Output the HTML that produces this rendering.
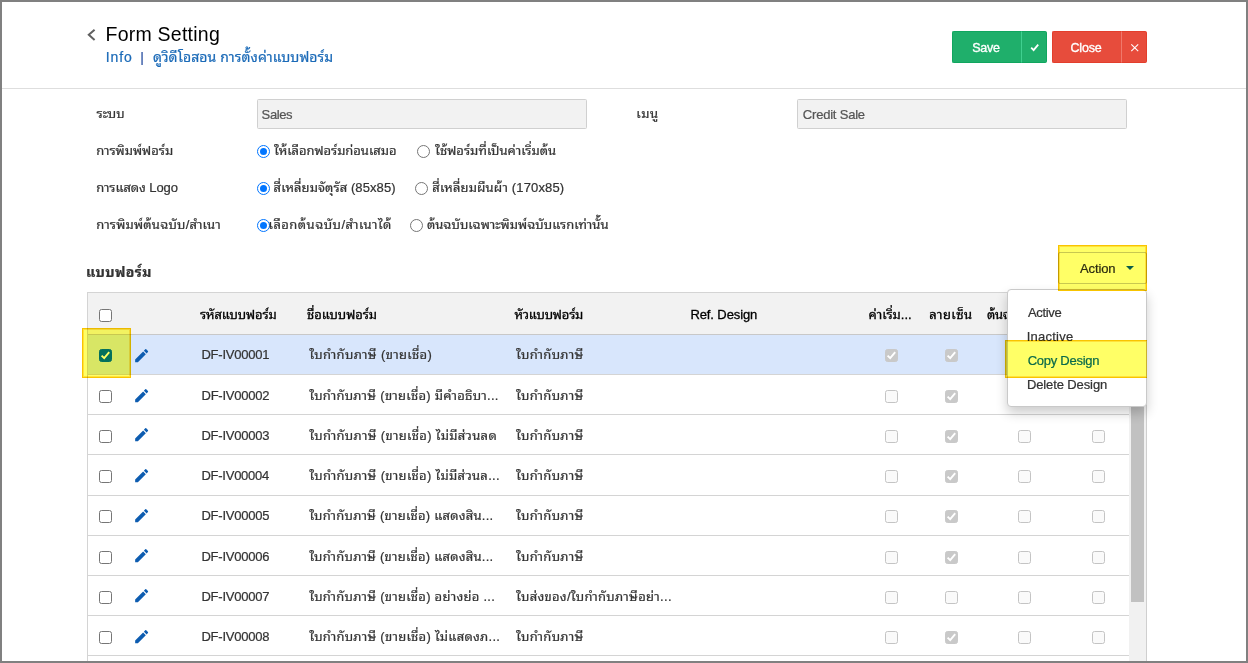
<!DOCTYPE html>
<html lang="th">
<head>
<meta charset="utf-8">
<title>Form Setting</title>
<style>
*{box-sizing:border-box;margin:0;padding:0}
html,body{width:1248px;height:663px;overflow:hidden;background:#fff}
body{position:relative;font-family:"Liberation Sans","Noto Sans Thai Looped","Loma","Noto Sans Thai",sans-serif;font-size:13px;color:#333}
.abs{position:absolute}
.t{position:absolute;white-space:nowrap;line-height:20px;height:20px}

.frame{position:absolute;left:0;top:0;width:1248px;height:663px;border:2px solid #808080;z-index:50;pointer-events:none}
.hline{position:absolute;left:2px;top:88px;width:1244px;height:1px;background:#dedede}
.inp{position:absolute;height:30px;width:330px;background:#f2f2f2;border:1px solid #d0d0d0;border-radius:1.5px}
.radio{position:absolute;width:13px;height:13px;border-radius:50%;border:1px solid #767676;background:#fff}
.radio.on{border:1.5px solid #0075ff}
.radio.on:after{content:"";position:absolute;left:1.5px;top:1.5px;width:7px;height:7px;border-radius:50%;background:#0075ff}
.btn{position:absolute;top:31px;height:32px;color:#fff;font-size:13px;line-height:30px;text-align:center}
.bt{display:inline-block;font-size:12.5px;letter-spacing:-.2px;left:-1.5px;-webkit-text-stroke:.35px #fff;position:relative;top:1px}
.hl{position:absolute;background:#ffff66;border:1px solid #f8c400;box-shadow:inset 0 0 0 1px #ffe23a;z-index:20;mix-blend-mode:multiply}
.cb{position:absolute;width:13px;height:13px;border:1px solid #767676;border-radius:2.5px;background:#fff}
.cb.dis{border-color:#c4c4c4;background:#fafafa}
.cb.dis.on{background:#c9c9c9;border-color:#c9c9c9}
.cb.chk{background:#04705c;border-color:#04705c;z-index:25}
.ln{position:absolute;left:88px;width:1041px;height:1px;background:#d4d4d4}
.menu{position:absolute;left:1007px;top:289px;width:140px;height:118px;background:#fff;border:1px solid #c9c9c9;border-radius:4px;box-shadow:0 6px 12px rgba(0,0,0,.2);z-index:10}
</style>
</head>
<body>
<div class="frame"></div>
<svg class="abs" style="left:84px;top:26px" width="16" height="18" viewBox="0 0 16 18"><polyline points="10.6,3.7 4.8,8.8 10.6,13.9" fill="none" stroke="#606060" stroke-width="2"/></svg>
<div class="btn" style="left:952px;width:70px;background:#1faf6b;border:1px solid #10a65f;border-right:0;border-radius:2px 0 0 2px"><span class="bt">Save</span></div>
<div class="btn" style="left:1021px;width:26px;background:#1faf6b;border:1px solid #10a65f;border-left:1px solid #3fd08f;border-radius:0 2px 2px 0">
<svg width="12" height="10" viewBox="0 0 12 10" style="position:absolute;left:8px;top:11px"><polyline points="1.2,4.7 3.6,7.1 8.2,1.6" fill="none" stroke="#fff" stroke-width="1.8"/></svg></div>
<div class="btn" style="left:1052px;width:70px;background:#e74c3c;border:1px solid #e33e2c;border-right:0;border-radius:2px 0 0 2px"><span class="bt">Close</span></div>
<div class="btn" style="left:1121px;width:26px;background:#e74c3c;border:1px solid #e33e2c;border-left:1px solid #f0786b;border-radius:0 2px 2px 0">
<svg width="10" height="10" viewBox="0 0 10 10" style="position:absolute;left:8px;top:11px"><path d="M1.3 1.3L8.2 8.2M8.2 1.3L1.3 8.2" fill="none" stroke="#fff" stroke-width="1.1"/></svg></div>
<div class="hline"></div>
<div class="inp" style="left:257px;top:99px"></div>
<div class="inp" style="left:797px;top:99px"></div>
<div class="radio on" style="left:257px;top:145px"></div>
<div class="radio" style="left:417px;top:145px"></div>
<div class="radio on" style="left:257px;top:182px"></div>
<div class="radio" style="left:415px;top:182px"></div>
<div class="radio on" style="left:257px;top:219px"></div>
<div class="radio" style="left:410px;top:219px"></div>
<div class="abs" style="left:1058px;top:252px;width:89px;height:32px;border:1px solid #c8c8c8;border-radius:2px;background:#fff"></div>
<div class="abs" style="left:1126px;top:266px;width:0;height:0;border-left:4px solid transparent;border-right:4px solid transparent;border-top:4px solid #0b5c4a;z-index:25"></div>
<div class="hl" style="left:1058px;top:245px;width:89px;height:46px"></div>
<div class="abs" style="left:87px;top:292px;width:1044px;height:371px;border:1px solid #d4d4d4;border-bottom:0"></div>
<div class="abs" style="left:88px;top:293px;width:1042px;height:41px;background:#f2f2f2"></div>
<div class="abs" style="left:88px;top:335px;width:1042px;height:39px;background:#d8e6fc"></div>
<div class="ln" style="top:334px;background:#c8c8c8"></div>
<div class="ln" style="top:374px;background:#d4d4d4"></div>
<div class="ln" style="top:414px;background:#d4d4d4"></div>
<div class="ln" style="top:454px;background:#d4d4d4"></div>
<div class="ln" style="top:495px;background:#d4d4d4"></div>
<div class="ln" style="top:535px;background:#d4d4d4"></div>
<div class="ln" style="top:575px;background:#d4d4d4"></div>
<div class="ln" style="top:615px;background:#d4d4d4"></div>
<div class="ln" style="top:655px;background:#d4d4d4"></div>
<div class="cb" style="left:99px;top:309px"></div>
<div class="cb chk" style="left:99px;top:349px"><svg width="11" height="11" viewBox="0 0 11 11" style="position:absolute;left:0;top:0"><polyline points="1.6,5.6 4.2,8.2 9.2,2.2" fill="none" stroke="#ffff66" stroke-width="1.9"/></svg></div>
<svg class="abs" style="left:132.7px;top:346.8px" width="17.3" height="17.3" viewBox="0 0 24 24"><path fill="#0d5cb0" d="M3 17.25V21h3.75L17.81 9.94l-3.75-3.75L3 17.25zM20.71 7.04a1 1 0 0 0 0-1.41l-2.34-2.34a1 1 0 0 0-1.41 0l-1.83 1.83 3.75 3.75 1.83-1.83z"/></svg>
<div class="cb dis on" style="left:885px;top:349px"><svg width="11" height="11" viewBox="0 0 11 11" style="position:absolute;left:0;top:0"><polyline points="1.6,5.6 4.2,8.2 9.2,2.2" fill="none" stroke="#fff" stroke-width="1.9"/></svg></div>
<div class="cb dis on" style="left:945px;top:349px"><svg width="11" height="11" viewBox="0 0 11 11" style="position:absolute;left:0;top:0"><polyline points="1.6,5.6 4.2,8.2 9.2,2.2" fill="none" stroke="#fff" stroke-width="1.9"/></svg></div>
<div class="cb" style="left:99px;top:390px"></div>
<svg class="abs" style="left:132.7px;top:386.6px" width="17.3" height="17.3" viewBox="0 0 24 24"><path fill="#0d5cb0" d="M3 17.25V21h3.75L17.81 9.94l-3.75-3.75L3 17.25zM20.71 7.04a1 1 0 0 0 0-1.41l-2.34-2.34a1 1 0 0 0-1.41 0l-1.83 1.83 3.75 3.75 1.83-1.83z"/></svg>
<div class="cb dis" style="left:885px;top:390px"></div>
<div class="cb dis on" style="left:945px;top:390px"><svg width="11" height="11" viewBox="0 0 11 11" style="position:absolute;left:0;top:0"><polyline points="1.6,5.6 4.2,8.2 9.2,2.2" fill="none" stroke="#fff" stroke-width="1.9"/></svg></div>
<div class="cb" style="left:99px;top:430px"></div>
<svg class="abs" style="left:132.7px;top:426.4px" width="17.3" height="17.3" viewBox="0 0 24 24"><path fill="#0d5cb0" d="M3 17.25V21h3.75L17.81 9.94l-3.75-3.75L3 17.25zM20.71 7.04a1 1 0 0 0 0-1.41l-2.34-2.34a1 1 0 0 0-1.41 0l-1.83 1.83 3.75 3.75 1.83-1.83z"/></svg>
<div class="cb dis" style="left:885px;top:430px"></div>
<div class="cb dis on" style="left:945px;top:430px"><svg width="11" height="11" viewBox="0 0 11 11" style="position:absolute;left:0;top:0"><polyline points="1.6,5.6 4.2,8.2 9.2,2.2" fill="none" stroke="#fff" stroke-width="1.9"/></svg></div>
<div class="cb dis" style="left:1018px;top:430px"></div>
<div class="cb dis" style="left:1092px;top:430px"></div>
<div class="cb" style="left:99px;top:470px"></div>
<svg class="abs" style="left:132.7px;top:466.6px" width="17.3" height="17.3" viewBox="0 0 24 24"><path fill="#0d5cb0" d="M3 17.25V21h3.75L17.81 9.94l-3.75-3.75L3 17.25zM20.71 7.04a1 1 0 0 0 0-1.41l-2.34-2.34a1 1 0 0 0-1.41 0l-1.83 1.83 3.75 3.75 1.83-1.83z"/></svg>
<div class="cb dis" style="left:885px;top:470px"></div>
<div class="cb dis on" style="left:945px;top:470px"><svg width="11" height="11" viewBox="0 0 11 11" style="position:absolute;left:0;top:0"><polyline points="1.6,5.6 4.2,8.2 9.2,2.2" fill="none" stroke="#fff" stroke-width="1.9"/></svg></div>
<div class="cb dis" style="left:1018px;top:470px"></div>
<div class="cb dis" style="left:1092px;top:470px"></div>
<div class="cb" style="left:99px;top:510px"></div>
<svg class="abs" style="left:132.7px;top:507.4px" width="17.3" height="17.3" viewBox="0 0 24 24"><path fill="#0d5cb0" d="M3 17.25V21h3.75L17.81 9.94l-3.75-3.75L3 17.25zM20.71 7.04a1 1 0 0 0 0-1.41l-2.34-2.34a1 1 0 0 0-1.41 0l-1.83 1.83 3.75 3.75 1.83-1.83z"/></svg>
<div class="cb dis" style="left:885px;top:510px"></div>
<div class="cb dis on" style="left:945px;top:510px"><svg width="11" height="11" viewBox="0 0 11 11" style="position:absolute;left:0;top:0"><polyline points="1.6,5.6 4.2,8.2 9.2,2.2" fill="none" stroke="#fff" stroke-width="1.9"/></svg></div>
<div class="cb dis" style="left:1018px;top:510px"></div>
<div class="cb dis" style="left:1092px;top:510px"></div>
<div class="cb" style="left:99px;top:551px"></div>
<svg class="abs" style="left:132.7px;top:547.2px" width="17.3" height="17.3" viewBox="0 0 24 24"><path fill="#0d5cb0" d="M3 17.25V21h3.75L17.81 9.94l-3.75-3.75L3 17.25zM20.71 7.04a1 1 0 0 0 0-1.41l-2.34-2.34a1 1 0 0 0-1.41 0l-1.83 1.83 3.75 3.75 1.83-1.83z"/></svg>
<div class="cb dis" style="left:885px;top:551px"></div>
<div class="cb dis on" style="left:945px;top:551px"><svg width="11" height="11" viewBox="0 0 11 11" style="position:absolute;left:0;top:0"><polyline points="1.6,5.6 4.2,8.2 9.2,2.2" fill="none" stroke="#fff" stroke-width="1.9"/></svg></div>
<div class="cb dis" style="left:1018px;top:551px"></div>
<div class="cb dis" style="left:1092px;top:551px"></div>
<div class="cb" style="left:99px;top:591px"></div>
<svg class="abs" style="left:132.7px;top:587.0px" width="17.3" height="17.3" viewBox="0 0 24 24"><path fill="#0d5cb0" d="M3 17.25V21h3.75L17.81 9.94l-3.75-3.75L3 17.25zM20.71 7.04a1 1 0 0 0 0-1.41l-2.34-2.34a1 1 0 0 0-1.41 0l-1.83 1.83 3.75 3.75 1.83-1.83z"/></svg>
<div class="cb dis" style="left:885px;top:591px"></div>
<div class="cb dis" style="left:945px;top:591px"></div>
<div class="cb dis" style="left:1018px;top:591px"></div>
<div class="cb dis" style="left:1092px;top:591px"></div>
<div class="cb" style="left:99px;top:631px"></div>
<svg class="abs" style="left:132.7px;top:627.8px" width="17.3" height="17.3" viewBox="0 0 24 24"><path fill="#0d5cb0" d="M3 17.25V21h3.75L17.81 9.94l-3.75-3.75L3 17.25zM20.71 7.04a1 1 0 0 0 0-1.41l-2.34-2.34a1 1 0 0 0-1.41 0l-1.83 1.83 3.75 3.75 1.83-1.83z"/></svg>
<div class="cb dis" style="left:885px;top:631px"></div>
<div class="cb dis on" style="left:945px;top:631px"><svg width="11" height="11" viewBox="0 0 11 11" style="position:absolute;left:0;top:0"><polyline points="1.6,5.6 4.2,8.2 9.2,2.2" fill="none" stroke="#fff" stroke-width="1.9"/></svg></div>
<div class="cb dis" style="left:1018px;top:631px"></div>
<div class="cb dis" style="left:1092px;top:631px"></div>
<div class="abs" style="left:1129px;top:293px;width:18px;height:368px;background:#f1f1f1;border-right:1px solid #cfcfcf"></div>
<div class="abs" style="left:1131px;top:300px;width:13px;height:302px;background:#c1c1c1"></div>
<div class="menu"></div>
<div class="hl" style="left:1005px;top:340px;width:142px;height:38px;border-right-width:0;width:141.5px"></div>
<div class="hl" style="left:82px;top:328px;width:49px;height:50px"></div>
<div id="title" class="t" style="left:105.47px;top:24.00px;font-size:19.5px;-webkit-text-stroke:0px #000;color:#000;font-weight:normal;letter-spacing:0.246px;z-index:1">Form Setting</div>
<div id="info" class="t" style="left:105.87px;top:47.00px;font-size:14px;-webkit-text-stroke:0.22px #1c6bb8;color:#1c6bb8;font-weight:normal;letter-spacing:0.822px;z-index:1">Info</div>
<div id="sep" class="t" style="left:140.21px;top:47.00px;font-size:14px;clip-path:inset(5px 0 2px 0);-webkit-text-stroke:0.22px #2f55a4;color:#2f55a4;font-weight:normal;letter-spacing:0.000px;z-index:1">|</div>
<div id="infoth" class="t" style="left:153.11px;top:47.00px;font-size:14px;-webkit-text-stroke:0.22px #1c6bb8;color:#1c6bb8;font-weight:normal;letter-spacing:0.077px;z-index:1">ดูวิดีโอสอน การตั้งค่าแบบฟอร์ม</div>
<div id="l1" class="t" style="left:96.58px;top:104.00px;font-size:13px;-webkit-text-stroke:0.22px #333;color:#333;font-weight:normal;letter-spacing:-0.056px;z-index:1">ระบบ</div>
<div id="l2" class="t" style="left:96.17px;top:141.00px;font-size:13px;-webkit-text-stroke:0.22px #333;color:#333;font-weight:normal;letter-spacing:-0.004px;z-index:1">การพิมพ์ฟอร์ม</div>
<div id="l3" class="t" style="left:96.17px;top:178.00px;font-size:13px;-webkit-text-stroke:0.22px #333;color:#333;font-weight:normal;letter-spacing:-0.075px;z-index:1">การแสดง Logo</div>
<div id="l4" class="t" style="left:96.17px;top:215.00px;font-size:13px;-webkit-text-stroke:0.22px #333;color:#333;font-weight:normal;letter-spacing:0.202px;z-index:1">การพิมพ์ต้นฉบับ/สำเนา</div>
<div id="sales" class="t" style="left:261.61px;top:105.00px;font-size:13px;-webkit-text-stroke:0.22px #555;color:#555;font-weight:normal;letter-spacing:-0.398px;z-index:1">Sales</div>
<div id="menu" class="t" style="left:636.30px;top:104.00px;font-size:13px;-webkit-text-stroke:0.22px #333;color:#333;font-weight:normal;letter-spacing:0.579px;z-index:1">เมนู</div>
<div id="credit" class="t" style="left:802.86px;top:105.00px;font-size:13px;-webkit-text-stroke:0.22px #555;color:#555;font-weight:normal;letter-spacing:-0.211px;z-index:1">Credit Sale</div>
<div id="r1a" class="t" style="left:274.10px;top:141.00px;font-size:13px;-webkit-text-stroke:0.22px #333;color:#333;font-weight:normal;letter-spacing:-0.045px;z-index:1">ให้เลือกฟอร์มก่อนเสมอ</div>
<div id="r1b" class="t" style="left:435.12px;top:141.00px;font-size:13px;-webkit-text-stroke:0.22px #333;color:#333;font-weight:normal;letter-spacing:0.016px;z-index:1">ใช้ฟอร์มที่เป็นค่าเริ่มต้น</div>
<div id="r2a" class="t" style="left:273.62px;top:178.00px;font-size:13px;-webkit-text-stroke:0.22px #333;color:#333;font-weight:normal;letter-spacing:0.087px;z-index:1">สี่เหลี่ยมจัตุรัส (85x85)</div>
<div id="r2b" class="t" style="left:432.31px;top:178.00px;font-size:13px;-webkit-text-stroke:0.22px #333;color:#333;font-weight:normal;letter-spacing:0.147px;z-index:1">สี่เหลี่ยมผืนผ้า (170x85)</div>
<div id="r3a" class="t" style="left:268.56px;top:215.00px;font-size:13px;-webkit-text-stroke:0.22px #333;color:#333;font-weight:normal;letter-spacing:0.463px;z-index:1">เลือกต้นฉบับ/สำเนาได้</div>
<div id="r3b" class="t" style="left:426.90px;top:215.00px;font-size:13px;-webkit-text-stroke:0.22px #333;color:#333;font-weight:normal;letter-spacing:0.029px;z-index:1">ต้นฉบับเฉพาะพิมพ์ฉบับแรกเท่านั้น</div>
<div id="sect" class="t" style="left:86.06px;top:262.00px;font-size:14px;-webkit-text-stroke:0.22px #333;color:#333;font-weight:bold;letter-spacing:0.377px;z-index:1">แบบฟอร์ม</div>
<div id="action" class="t" style="left:1079.93px;top:259.00px;font-size:13px;-webkit-text-stroke:0.22px #2b2b10;color:#2b2b10;font-weight:normal;letter-spacing:-0.100px;z-index:25">Action</div>
<div id="h1" class="t" style="left:199.98px;top:305.00px;font-size:13px;-webkit-text-stroke:0.3px #000;color:#000;font-weight:normal;letter-spacing:-0.120px;z-index:1">รหัสแบบฟอร์ม</div>
<div id="h2" class="t" style="left:307.10px;top:305.00px;font-size:13px;-webkit-text-stroke:0.3px #000;color:#000;font-weight:normal;letter-spacing:-0.079px;z-index:1">ชื่อแบบฟอร์ม</div>
<div id="h3" class="t" style="left:514.41px;top:305.00px;font-size:13px;-webkit-text-stroke:0.3px #000;color:#000;font-weight:normal;letter-spacing:-0.203px;z-index:1">หัวแบบฟอร์ม</div>
<div id="h4" class="t" style="left:690.49px;top:305.00px;font-size:13px;-webkit-text-stroke:0.3px #000;color:#000;font-weight:normal;letter-spacing:-0.116px;z-index:1">Ref. Design</div>
<div id="h5" class="t" style="left:868.62px;top:305.00px;font-size:13px;-webkit-text-stroke:0.3px #000;color:#000;font-weight:normal;letter-spacing:0.019px;z-index:1">ค่าเริ่ม...</div>
<div id="h6" class="t" style="left:929.19px;top:305.00px;font-size:13px;-webkit-text-stroke:0.3px #000;color:#000;font-weight:normal;letter-spacing:0.468px;z-index:1">ลายเซ็น</div>
<div id="h7" class="t" style="left:987.10px;top:305.00px;font-size:13px;-webkit-text-stroke:0.3px #000;color:#000;font-weight:normal;letter-spacing:-0.433px;z-index:1">ต้นฉบับ</div>
<div id="c0" class="t" style="left:201.46px;top:345.00px;font-size:13px;-webkit-text-stroke:0.22px #333;color:#333;font-weight:normal;letter-spacing:-0.228px;z-index:1">DF-IV00001</div>
<div id="n0" class="t" style="left:309.29px;top:345.00px;font-size:13px;-webkit-text-stroke:0.22px #333;color:#333;font-weight:normal;letter-spacing:0.344px;z-index:1">ใบกำกับภาษี (ขายเชื่อ)</div>
<div id="d0" class="t" style="left:516.10px;top:345.00px;font-size:13px;-webkit-text-stroke:0.22px #333;color:#333;font-weight:normal;letter-spacing:0.314px;z-index:1">ใบกำกับภาษี</div>
<div id="c1" class="t" style="left:201.46px;top:386.00px;font-size:13px;-webkit-text-stroke:0.22px #333;color:#333;font-weight:normal;letter-spacing:-0.216px;z-index:1">DF-IV00002</div>
<div id="n1" class="t" style="left:309.29px;top:386.00px;font-size:13px;-webkit-text-stroke:0.22px #333;color:#333;font-weight:normal;letter-spacing:0.269px;z-index:1">ใบกำกับภาษี (ขายเชื่อ) มีคำอธิบา...</div>
<div id="d1" class="t" style="left:516.10px;top:386.00px;font-size:13px;-webkit-text-stroke:0.22px #333;color:#333;font-weight:normal;letter-spacing:0.314px;z-index:1">ใบกำกับภาษี</div>
<div id="c2" class="t" style="left:201.46px;top:426.00px;font-size:13px;-webkit-text-stroke:0.22px #333;color:#333;font-weight:normal;letter-spacing:-0.219px;z-index:1">DF-IV00003</div>
<div id="n2" class="t" style="left:309.29px;top:426.00px;font-size:13px;-webkit-text-stroke:0.22px #333;color:#333;font-weight:normal;letter-spacing:0.319px;z-index:1">ใบกำกับภาษี (ขายเชื่อ) ไม่มีส่วนลด</div>
<div id="d2" class="t" style="left:516.10px;top:426.00px;font-size:13px;-webkit-text-stroke:0.22px #333;color:#333;font-weight:normal;letter-spacing:0.314px;z-index:1">ใบกำกับภาษี</div>
<div id="c3" class="t" style="left:201.46px;top:466.00px;font-size:13px;-webkit-text-stroke:0.22px #333;color:#333;font-weight:normal;letter-spacing:-0.251px;z-index:1">DF-IV00004</div>
<div id="n3" class="t" style="left:309.29px;top:466.00px;font-size:13px;-webkit-text-stroke:0.22px #333;color:#333;font-weight:normal;letter-spacing:0.309px;z-index:1">ใบกำกับภาษี (ขายเชื่อ) ไม่มีส่วนล...</div>
<div id="d3" class="t" style="left:516.10px;top:466.00px;font-size:13px;-webkit-text-stroke:0.22px #333;color:#333;font-weight:normal;letter-spacing:0.314px;z-index:1">ใบกำกับภาษี</div>
<div id="c4" class="t" style="left:201.46px;top:506.00px;font-size:13px;-webkit-text-stroke:0.22px #333;color:#333;font-weight:normal;letter-spacing:-0.228px;z-index:1">DF-IV00005</div>
<div id="n4" class="t" style="left:309.29px;top:506.00px;font-size:13px;-webkit-text-stroke:0.22px #333;color:#333;font-weight:normal;letter-spacing:0.236px;z-index:1">ใบกำกับภาษี (ขายเชื่อ) แสดงสิน...</div>
<div id="d4" class="t" style="left:516.10px;top:506.00px;font-size:13px;-webkit-text-stroke:0.22px #333;color:#333;font-weight:normal;letter-spacing:0.314px;z-index:1">ใบกำกับภาษี</div>
<div id="c5" class="t" style="left:201.46px;top:547.00px;font-size:13px;-webkit-text-stroke:0.22px #333;color:#333;font-weight:normal;letter-spacing:-0.222px;z-index:1">DF-IV00006</div>
<div id="n5" class="t" style="left:309.29px;top:547.00px;font-size:13px;-webkit-text-stroke:0.22px #333;color:#333;font-weight:normal;letter-spacing:0.236px;z-index:1">ใบกำกับภาษี (ขายเชื่อ) แสดงสิน...</div>
<div id="d5" class="t" style="left:516.10px;top:547.00px;font-size:13px;-webkit-text-stroke:0.22px #333;color:#333;font-weight:normal;letter-spacing:0.314px;z-index:1">ใบกำกับภาษี</div>
<div id="c6" class="t" style="left:201.46px;top:587.00px;font-size:13px;-webkit-text-stroke:0.22px #333;color:#333;font-weight:normal;letter-spacing:-0.221px;z-index:1">DF-IV00007</div>
<div id="n6" class="t" style="left:309.29px;top:587.00px;font-size:13px;-webkit-text-stroke:0.22px #333;color:#333;font-weight:normal;letter-spacing:0.257px;z-index:1">ใบกำกับภาษี (ขายเชื่อ) อย่างย่อ ...</div>
<div id="d6" class="t" style="left:516.10px;top:587.00px;font-size:13px;-webkit-text-stroke:0.22px #333;color:#333;font-weight:normal;letter-spacing:0.294px;z-index:1">ใบส่งของ/ใบกำกับภาษีอย่า...</div>
<div id="c7" class="t" style="left:201.46px;top:627.00px;font-size:13px;-webkit-text-stroke:0.22px #333;color:#333;font-weight:normal;letter-spacing:-0.231px;z-index:1">DF-IV00008</div>
<div id="n7" class="t" style="left:309.29px;top:627.00px;font-size:13px;-webkit-text-stroke:0.22px #333;color:#333;font-weight:normal;letter-spacing:0.276px;z-index:1">ใบกำกับภาษี (ขายเชื่อ) ไม่แสดงภ...</div>
<div id="d7" class="t" style="left:516.10px;top:627.00px;font-size:13px;-webkit-text-stroke:0.22px #333;color:#333;font-weight:normal;letter-spacing:0.314px;z-index:1">ใบกำกับภาษี</div>
<div id="m1" class="t" style="left:1027.93px;top:303.00px;font-size:13px;-webkit-text-stroke:0.22px #333;color:#333;font-weight:normal;letter-spacing:-0.306px;z-index:12">Active</div>
<div id="m2" class="t" style="left:1026.78px;top:327.00px;font-size:13px;-webkit-text-stroke:0.22px #333;color:#333;font-weight:normal;letter-spacing:0.226px;z-index:12">Inactive</div>
<div id="m3" class="t" style="left:1027.64px;top:351.00px;font-size:13px;-webkit-text-stroke:0.22px #0a6a4a;color:#0a6a4a;font-weight:normal;letter-spacing:-0.253px;z-index:25">Copy Design</div>
<div id="m4" class="t" style="left:1026.89px;top:375.00px;font-size:13px;-webkit-text-stroke:0.22px #333;color:#333;font-weight:normal;letter-spacing:-0.107px;z-index:12">Delete Design</div>
</body>
</html>
